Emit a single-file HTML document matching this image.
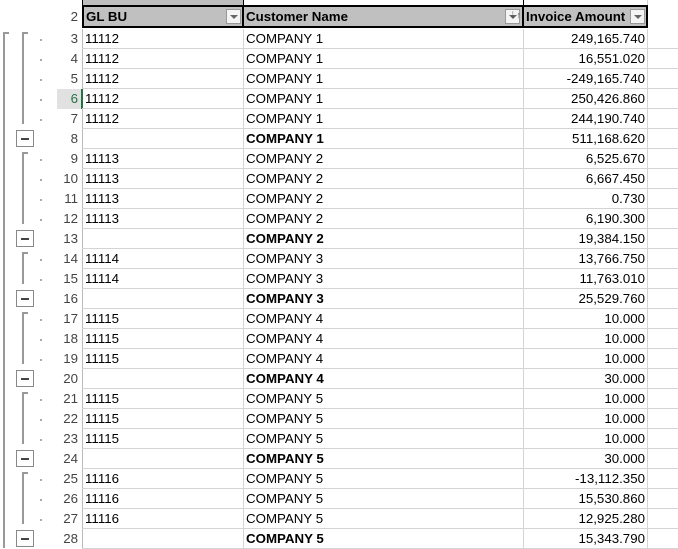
<!DOCTYPE html>
<html><head><meta charset="utf-8"><style>
body{margin:0;width:678px;height:548px;overflow:hidden;background:#fff;font-family:"Liberation Sans",Arial,sans-serif;font-size:13.3px;color:#000;position:relative}
.a{position:absolute}
.r{position:absolute;left:82px;width:596px;height:20px;border-bottom:1px solid #d4d4d4;box-sizing:border-box}
.r span{position:absolute;top:2px;white-space:nowrap}
.c1{left:3px}.c2{left:164px}.c3{right:33px;text-align:right}
.b{font-weight:bold}
.n{position:absolute;left:57px;width:21px;text-align:right;color:#444;font-size:13.3px}
.v{position:absolute;top:29px;width:1px;height:519px;background:#d4d4d4}
.dot{position:absolute;left:40px;width:2px;height:2px;background:#aaa}
.mb{position:absolute;left:16px;width:16px;height:15px;border:1px solid #888;background:#fff;box-sizing:content-box}
.mb:after{content:"";position:absolute;left:4px;top:7px;width:8px;height:2px;background:#444}
.br{position:absolute;left:22px;width:2px;background:#999}
.bt{position:absolute;left:22px;width:6px;height:2px;background:#999}
.dd{position:absolute;top:9px;width:15px;height:15px;background:#f4f4f4;border:1px solid #999;box-sizing:border-box}
.dd:after{content:"";position:absolute;left:3px;top:5px;border-left:4px solid transparent;border-right:4px solid transparent;border-top:4px solid #666}
</style></head><body>
<!-- row 1 -->
<div class="a" style="left:82px;top:0;width:160px;height:5px;background:#bdbdbd;border:1px solid #000;border-top:none"></div>
<div class="a" style="left:243px;top:0;width:279px;height:5px;border:1px solid #000;border-top:none"></div>
<!-- header -->
<div class="a" style="left:82px;top:5px;width:565px;height:23px;background:#c0c0c0;border-top:2px solid #000;border-bottom:2px solid #000;box-sizing:border-box"></div>
<div class="a" style="left:82px;top:5px;width:2px;height:23px;background:#000"></div>
<div class="a" style="left:242px;top:5px;width:2px;height:23px;background:#000"></div>
<div class="a" style="left:522px;top:5px;width:2px;height:23px;background:#000"></div>
<div class="a" style="left:646px;top:5px;width:2px;height:23px;background:#000"></div>
<div class="a b" style="left:86px;top:9px">GL BU</div>
<div class="a b" style="left:246px;top:9px">Customer Name</div>
<div class="a b" style="left:526px;top:9px">Invoice Amount</div>
<div class="dd" style="left:226px"></div>
<div class="dd" style="left:505px;background:#f4f4f4"></div>
<div class="a" style="left:509px;top:10px;font-size:9px;color:#555">⇣↑</div>
<div class="dd" style="left:630px"></div>
<div class="n" style="top:9px">2</div>
<!-- vertical gridlines -->
<div class="v" style="left:82px;background:#bbb"></div>
<div class="v" style="left:243px"></div>
<div class="v" style="left:523px"></div>
<div class="v" style="left:647px"></div>
<div class="a" style="left:647px;top:0;width:1px;height:5px;background:#d4d4d4"></div>
<!-- outline -->
<div class="a" style="left:3px;top:32px;width:2px;height:516px;background:#999"></div>
<div class="a" style="left:3px;top:32px;width:6px;height:2px;background:#999"></div>
<div class="br" style="top:32px;height:92px"></div><div class="bt" style="top:32px"></div>
<div class="br" style="top:152px;height:72px"></div><div class="bt" style="top:152px"></div>
<div class="br" style="top:252px;height:32px"></div><div class="bt" style="top:252px"></div>
<div class="br" style="top:312px;height:52px"></div><div class="bt" style="top:312px"></div>
<div class="br" style="top:392px;height:52px"></div><div class="bt" style="top:392px"></div>
<div class="br" style="top:472px;height:52px"></div><div class="bt" style="top:472px"></div>
<div class="mb" style="top:130px"></div>
<div class="mb" style="top:230px"></div>
<div class="mb" style="top:290px"></div>
<div class="mb" style="top:370px"></div>
<div class="mb" style="top:450px"></div>
<div class="mb" style="top:530px"></div>
<!-- row 6 highlight -->
<div class="a" style="left:57px;top:89px;width:24px;height:20px;background:#e1e1e1"></div>
<div class="a" style="left:81px;top:89px;width:2px;height:20px;background:#217346"></div>

<div class="r" style="top:29px"><span class="c1">11112</span><span class="c2">COMPANY 1</span><span class="c3">249,165.740</span></div>
<div class="r" style="top:49px"><span class="c1">11112</span><span class="c2">COMPANY 1</span><span class="c3">16,551.020</span></div>
<div class="r" style="top:69px"><span class="c1">11112</span><span class="c2">COMPANY 1</span><span class="c3">-249,165.740</span></div>
<div class="r" style="top:89px"><span class="c1">11112</span><span class="c2">COMPANY 1</span><span class="c3">250,426.860</span></div>
<div class="r" style="top:109px"><span class="c1">11112</span><span class="c2">COMPANY 1</span><span class="c3">244,190.740</span></div>
<div class="r" style="top:129px"><span class="c2 b">COMPANY 1</span><span class="c3">511,168.620</span></div>
<div class="r" style="top:149px"><span class="c1">11113</span><span class="c2">COMPANY 2</span><span class="c3">6,525.670</span></div>
<div class="r" style="top:169px"><span class="c1">11113</span><span class="c2">COMPANY 2</span><span class="c3">6,667.450</span></div>
<div class="r" style="top:189px"><span class="c1">11113</span><span class="c2">COMPANY 2</span><span class="c3">0.730</span></div>
<div class="r" style="top:209px"><span class="c1">11113</span><span class="c2">COMPANY 2</span><span class="c3">6,190.300</span></div>
<div class="r" style="top:229px"><span class="c2 b">COMPANY 2</span><span class="c3">19,384.150</span></div>
<div class="r" style="top:249px"><span class="c1">11114</span><span class="c2">COMPANY 3</span><span class="c3">13,766.750</span></div>
<div class="r" style="top:269px"><span class="c1">11114</span><span class="c2">COMPANY 3</span><span class="c3">11,763.010</span></div>
<div class="r" style="top:289px"><span class="c2 b">COMPANY 3</span><span class="c3">25,529.760</span></div>
<div class="r" style="top:309px"><span class="c1">11115</span><span class="c2">COMPANY 4</span><span class="c3">10.000</span></div>
<div class="r" style="top:329px"><span class="c1">11115</span><span class="c2">COMPANY 4</span><span class="c3">10.000</span></div>
<div class="r" style="top:349px"><span class="c1">11115</span><span class="c2">COMPANY 4</span><span class="c3">10.000</span></div>
<div class="r" style="top:369px"><span class="c2 b">COMPANY 4</span><span class="c3">30.000</span></div>
<div class="r" style="top:389px"><span class="c1">11115</span><span class="c2">COMPANY 5</span><span class="c3">10.000</span></div>
<div class="r" style="top:409px"><span class="c1">11115</span><span class="c2">COMPANY 5</span><span class="c3">10.000</span></div>
<div class="r" style="top:429px"><span class="c1">11115</span><span class="c2">COMPANY 5</span><span class="c3">10.000</span></div>
<div class="r" style="top:449px"><span class="c2 b">COMPANY 5</span><span class="c3">30.000</span></div>
<div class="r" style="top:469px"><span class="c1">11116</span><span class="c2">COMPANY 5</span><span class="c3">-13,112.350</span></div>
<div class="r" style="top:489px"><span class="c1">11116</span><span class="c2">COMPANY 5</span><span class="c3">15,530.860</span></div>
<div class="r" style="top:509px"><span class="c1">11116</span><span class="c2">COMPANY 5</span><span class="c3">12,925.280</span></div>
<div class="r" style="top:529px"><span class="c2 b">COMPANY 5</span><span class="c3">15,343.790</span></div>

<div class="n" style="top:31px">3</div><div class="dot" style="top:39px"></div>
<div class="n" style="top:51px">4</div><div class="dot" style="top:59px"></div>
<div class="n" style="top:71px">5</div><div class="dot" style="top:79px"></div>
<div class="n" style="top:91px;color:#217346">6</div><div class="dot" style="top:99px"></div>
<div class="n" style="top:111px">7</div><div class="dot" style="top:119px"></div>
<div class="n" style="top:131px">8</div>
<div class="n" style="top:151px">9</div><div class="dot" style="top:159px"></div>
<div class="n" style="top:171px">10</div><div class="dot" style="top:179px"></div>
<div class="n" style="top:191px">11</div><div class="dot" style="top:199px"></div>
<div class="n" style="top:211px">12</div><div class="dot" style="top:219px"></div>
<div class="n" style="top:231px">13</div>
<div class="n" style="top:251px">14</div><div class="dot" style="top:259px"></div>
<div class="n" style="top:271px">15</div><div class="dot" style="top:279px"></div>
<div class="n" style="top:291px">16</div>
<div class="n" style="top:311px">17</div><div class="dot" style="top:319px"></div>
<div class="n" style="top:331px">18</div><div class="dot" style="top:339px"></div>
<div class="n" style="top:351px">19</div><div class="dot" style="top:359px"></div>
<div class="n" style="top:371px">20</div>
<div class="n" style="top:391px">21</div><div class="dot" style="top:399px"></div>
<div class="n" style="top:411px">22</div><div class="dot" style="top:419px"></div>
<div class="n" style="top:431px">23</div><div class="dot" style="top:439px"></div>
<div class="n" style="top:451px">24</div>
<div class="n" style="top:471px">25</div><div class="dot" style="top:479px"></div>
<div class="n" style="top:491px">26</div><div class="dot" style="top:499px"></div>
<div class="n" style="top:511px">27</div><div class="dot" style="top:519px"></div>
<div class="n" style="top:531px">28</div>
</body></html>
